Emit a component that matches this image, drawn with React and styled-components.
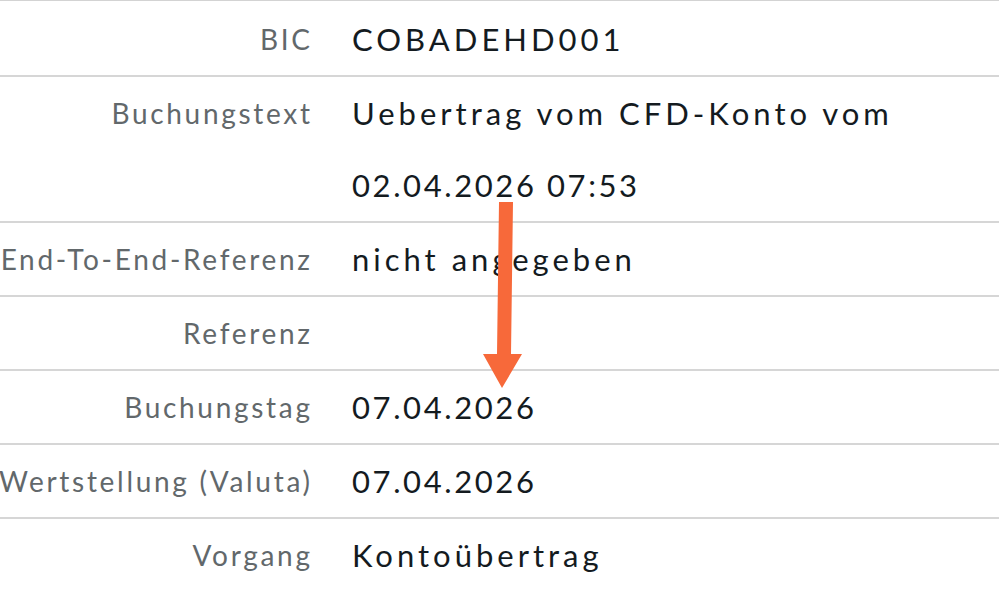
import React from 'react';
import styled, { createGlobalStyle } from 'styled-components';

const GlobalStyle = createGlobalStyle`
  html, body {
    margin: 0;
    padding: 0;
    background: #ffffff;
    overflow: hidden;
  }
  body {
    font-family: Lato, "Liberation Sans", sans-serif;
    -webkit-font-smoothing: antialiased;
  }
`;

const Screen = styled.div`
  position: relative;
  width: 999px;
  height: 590px;
  overflow: hidden;
  background: #ffffff;
`;

const DetailList = styled.div`
  display: flex;
  flex-direction: column;
  border-top: 1px solid #d3d3d3;
  padding-top: 2px;
`;

const Row = styled.div`
  display: grid;
  grid-template-columns: 310px 1fr;
  column-gap: 42px;
  border-bottom: 2px solid #d6d6d6;
  min-height: 72px;
`;

const Label = styled.div`
  display: flex;
  justify-content: flex-end;
  white-space: nowrap;
  font-size: 28px;
  line-height: 72px;
  letter-spacing: 2.7px;
  margin-right: -2.7px;
  color: #62686b;
`;

const Value = styled.div`
  font-size: 31px;
  line-height: 72px;
  color: #141b1f;
  white-space: nowrap;
`;

const Line = styled.div`
  letter-spacing: ${(p) => (p.$numeric ? '2.6px' : '4px')};
`;

const ArrowOverlay = styled.svg`
  position: absolute;
  left: 480px;
  top: 199px;
  pointer-events: none;
`;

const isNumeric = (text) => /^[\d.: ]+$/.test(text);

const rows = [
  { label: 'BIC', value: ['COBADEHD001'] },
  { label: 'Buchungstext', value: ['Uebertrag vom CFD-Konto vom', '02.04.2026 07:53'] },
  { label: 'End-To-End-Referenz', value: ['nicht angegeben'] },
  { label: 'Referenz', value: [] },
  { label: 'Buchungstag', value: ['07.04.2026'] },
  { label: 'Wertstellung (Valuta)', value: ['07.04.2026'] },
  { label: 'Vorgang', value: ['Kontoübertrag'] },
];

const Arrow = () => (
  <ArrowOverlay width="50" height="195" viewBox="0 0 50 195">
    <path d="M19 3 L33 3 L31 155 L42 155 L22 189 L3 155 L17 155 Z" fill="#f7693a" />
  </ArrowOverlay>
);

const App = () => (
  <Screen>
    <GlobalStyle />
    <DetailList>
      {rows.map((row) => (
        <Row key={row.label}>
          <Label>{row.label}</Label>
          <Value>
            {row.value.map((line) => (
              <Line key={line} $numeric={isNumeric(line)}>
                {line}
              </Line>
            ))}
          </Value>
        </Row>
      ))}
    </DetailList>
    <Arrow />
  </Screen>
);

export default App;
